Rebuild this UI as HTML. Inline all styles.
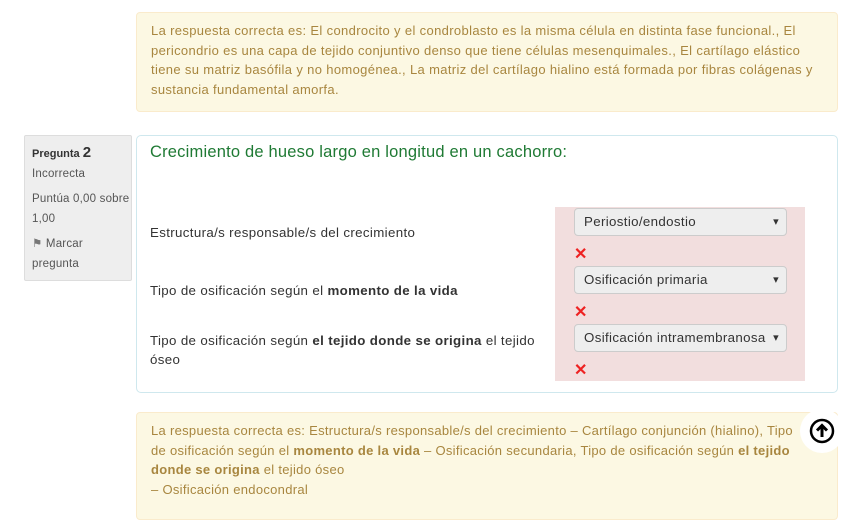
<!DOCTYPE html>
<html><head><meta charset="utf-8"><style>
body{margin:0;width:848px;height:506px;background:#fff;font-family:"Liberation Sans",sans-serif;position:relative;overflow:hidden;font-size:13px;color:#333}
.fb{position:absolute;left:136px;width:670px;background:#fcf8e3;border:1px solid #faebcc;border-radius:4px;color:#a8863f;line-height:19.5px;padding:8px 16px 8px 14px;letter-spacing:0.35px}
.info{position:absolute;left:24px;top:135px;width:99px;height:137px;background:#eee;border:1px solid #ddd;border-radius:2px;padding:7px 0 0 7px;font-size:11.5px;color:#555;line-height:19.5px;letter-spacing:0.2px}
.q{position:absolute;left:136px;top:135px;width:700px;height:256px;border:1px solid #cfe8ee;border-radius:5px}
.t{position:absolute;left:150px;font-size:13.3px;color:#333;letter-spacing:0.35px}
.sel{position:absolute;left:574px;width:202px;height:26px;border:1px solid #ccc;border-radius:4px;background:#eee;padding-left:9px;line-height:26px;font-size:13.3px;color:#333;letter-spacing:0.35px}
.sel:after{content:"▾";position:absolute;right:7px;font-size:11px}
.x{position:absolute;left:574px;color:#e22;font-size:16px;font-weight:bold}
</style></head><body>
<div class="fb" style="top:12px;height:82px">La respuesta correcta es: El condrocito y el condroblasto es la misma célula en distinta fase funcional., El pericondrio es una capa de tejido conjuntivo denso que tiene células mesenquimales., El cartílago elástico tiene su matriz basófila y no homogénea., La matriz del cartílago hialino está formada por fibras colágenas y sustancia fundamental amorfa.</div>
<div class="info"><b style="font-size:11px;color:#333;letter-spacing:0">Pregunta <span style="font-size:15px">2</span></b><br>Incorrecta<div style="margin-top:6px">Puntúa 0,00 sobre 1,00</div><div style="margin-top:6px"><span style="color:#777">⚑</span> Marcar pregunta</div></div>
<div class="q"></div>
<div style="position:absolute;left:150px;top:143px;font-size:16.5px;color:#1f7a34;letter-spacing:0.2px">Crecimiento de hueso largo en longitud en un cachorro:</div>
<div style="position:absolute;left:555px;top:207px;width:250px;height:174px;background:#f2dede"></div>
<div class="t" style="top:225px">Estructura/s responsable/s del crecimiento</div>
<div class="t" style="top:283px">Tipo de osificación según el <b>momento de la vida</b></div>
<div class="t" style="top:331px;width:390px;line-height:19px">Tipo de osificación según <b>el tejido donde se origina</b> el tejido óseo</div>
<div class="sel" style="top:208px">Periostio/endostio</div>
<div class="x" style="top:244px">✕</div>
<div class="sel" style="top:266px">Osificación primaria</div>
<div class="x" style="top:302px">✕</div>
<div class="sel" style="top:324px">Osificación intramembranosa</div>
<div class="x" style="top:360px">✕</div>
<div class="fb" style="top:412px;height:90px;white-space:nowrap;letter-spacing:0.3px">La respuesta correcta es: Estructura/s responsable/s del crecimiento – Cartílago conjunción (hialino), Tipo<br>de osificación según el <b>momento de la vida</b> – Osificación secundaria, Tipo de osificación según <b>el tejido</b><br><b>donde se origina</b> el tejido óseo<br>– Osificación endocondral</div>
<div style="position:absolute;left:800px;top:409px;width:44px;height:44px;border-radius:50%;background:#fff"></div>
<svg style="position:absolute;left:809px;top:418px" width="26" height="26" viewBox="0 0 26 26"><circle cx="13" cy="13" r="11" fill="none" stroke="#000" stroke-width="2.5"/><path d="M13 19V8M8 12.5L13 7.5L18 12.5" fill="none" stroke="#000" stroke-width="3"/></svg>
</body></html>
